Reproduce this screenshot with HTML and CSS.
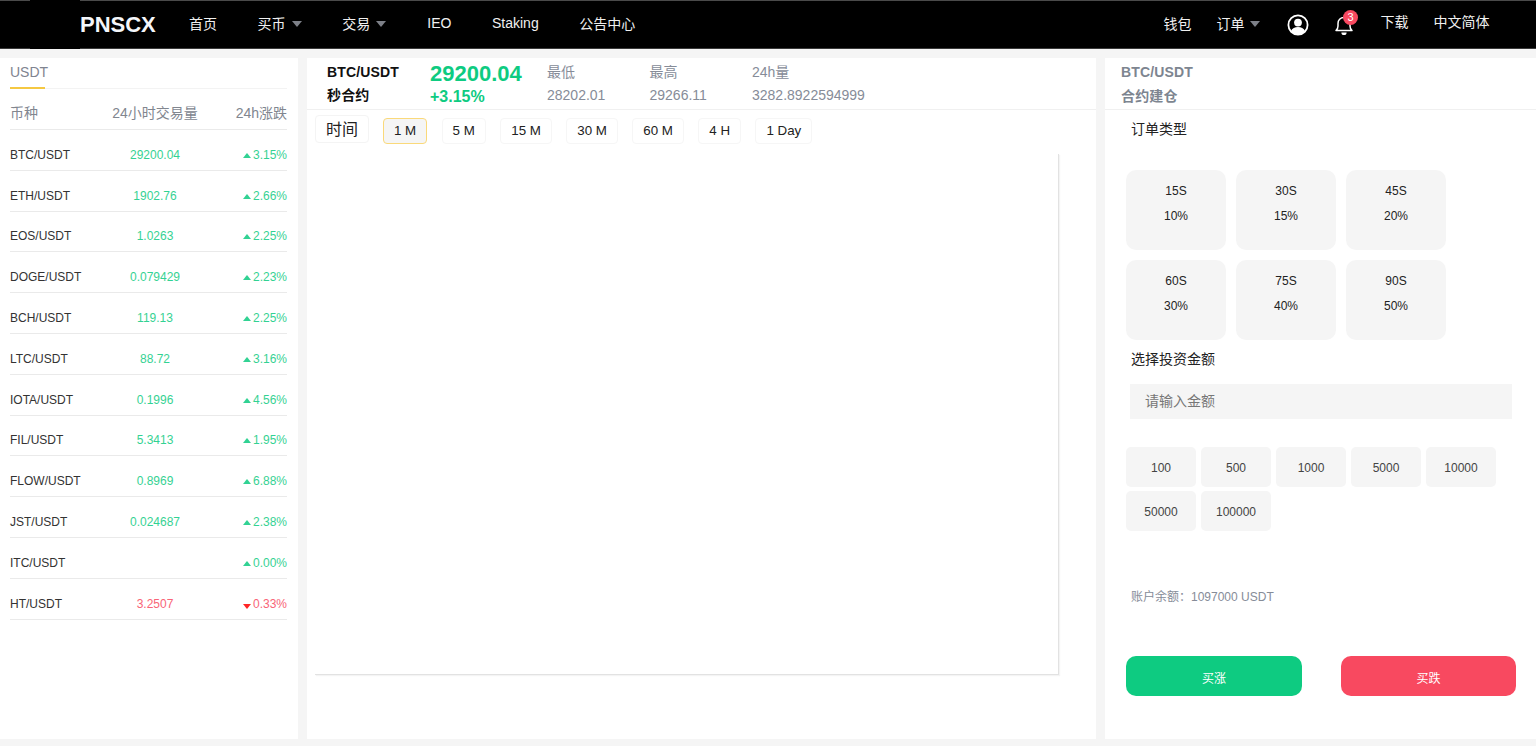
FILE: index.html
```html
<!DOCTYPE html>
<html lang="zh-CN">
<head>
<meta charset="utf-8">
<title>PNSCX</title>
<link rel="stylesheet" href="styles.css">
</head>
<body>
<header class="topbar">
  <div class="brand">PNSCX</div>
  <nav class="nav">
    <a>首页</a>
    <a>买币<i class="caret"></i></a>
    <a>交易<i class="caret"></i></a>
    <a>IEO</a>
    <a>Staking</a>
    <a>公告中心</a>
  </nav>
  <div class="tools">
    <a class="t-wallet">钱包</a>
    <a class="t-order">订单<i class="caret"></i></a>
    <svg class="t-user" width="22" height="22" viewBox="0 0 22 22"><circle cx="11" cy="11" r="9.6" fill="#000" stroke="#fff" stroke-width="1.8"/><circle cx="11" cy="8.6" r="3.9" fill="#fff"/><path d="M3.8 17.2c1.4-3 4-4.3 7.2-4.3s5.8 1.3 7.2 4.3A9.6 9.6 0 0 1 11 20.6a9.6 9.6 0 0 1-7.2-3.4z" fill="#fff"/></svg>
    <span class="t-bell">
      <svg width="20" height="22" viewBox="0 0 20 22"><path d="M2 16.6c1.4-1.3 2-2.6 2-4.6V9.4C4 6 6.3 3.6 10 3.6S16 6 16 9.4V12c0 2 .6 3.3 2 4.6z" fill="none" stroke="#fff" stroke-width="1.5" stroke-linejoin="round"/><path d="M7.4 18.4h5.2a2.6 2.6 0 0 1-5.2 0z" fill="#fff"/></svg>
      <b class="badge">3</b>
    </span>
    <a class="t-dl">下载</a>
    <a class="t-lang">中文简体</a>
  </div>
</header>

<main class="layout">
  <aside class="market">
    <div class="tab"><span>USDT</span></div>
    <div class="m-head"><span class="c1">币种</span><span class="c2">24小时交易量</span><span class="c3">24h涨跌</span></div>
    <div class="m-row"><span class="c1">BTC/USDT</span><span class="c2 up">29200.04</span><span class="c3 up"><i class="tri-up"></i>3.15%</span></div>
    <div class="m-row"><span class="c1">ETH/USDT</span><span class="c2 up">1902.76</span><span class="c3 up"><i class="tri-up"></i>2.66%</span></div>
    <div class="m-row"><span class="c1">EOS/USDT</span><span class="c2 up">1.0263</span><span class="c3 up"><i class="tri-up"></i>2.25%</span></div>
    <div class="m-row"><span class="c1">DOGE/USDT</span><span class="c2 up">0.079429</span><span class="c3 up"><i class="tri-up"></i>2.23%</span></div>
    <div class="m-row"><span class="c1">BCH/USDT</span><span class="c2 up">119.13</span><span class="c3 up"><i class="tri-up"></i>2.25%</span></div>
    <div class="m-row"><span class="c1">LTC/USDT</span><span class="c2 up">88.72</span><span class="c3 up"><i class="tri-up"></i>3.16%</span></div>
    <div class="m-row"><span class="c1">IOTA/USDT</span><span class="c2 up">0.1996</span><span class="c3 up"><i class="tri-up"></i>4.56%</span></div>
    <div class="m-row"><span class="c1">FIL/USDT</span><span class="c2 up">5.3413</span><span class="c3 up"><i class="tri-up"></i>1.95%</span></div>
    <div class="m-row"><span class="c1">FLOW/USDT</span><span class="c2 up">0.8969</span><span class="c3 up"><i class="tri-up"></i>6.88%</span></div>
    <div class="m-row"><span class="c1">JST/USDT</span><span class="c2 up">0.024687</span><span class="c3 up"><i class="tri-up"></i>2.38%</span></div>
    <div class="m-row"><span class="c1">ITC/USDT</span><span class="c2 up"></span><span class="c3 up"><i class="tri-up"></i>0.00%</span></div>
    <div class="m-row"><span class="c1">HT/USDT</span><span class="c2 down">3.2507</span><span class="c3 down"><i class="tri-down"></i>0.33%</span></div>
  </aside>

  <section class="chart-panel">
    <div class="ticker">
      <div class="tk-name"><strong>BTC/USDT</strong><strong>秒合约</strong></div>
      <div class="tk-price"><span class="big">29200.04</span><span class="pct">+3.15%</span></div>
      <div class="tk-stat s1"><span>最低</span><span>28202.01</span></div>
      <div class="tk-stat s2"><span>最高</span><span>29266.11</span></div>
      <div class="tk-stat"><span>24h量</span><span>3282.8922594999</span></div>
    </div>
    <div class="periods">
      <span class="p-label">时间</span>
      <span class="p-btn active">1 M</span>
      <span class="p-btn">5 M</span>
      <span class="p-btn">15 M</span>
      <span class="p-btn">30 M</span>
      <span class="p-btn">60 M</span>
      <span class="p-btn">4 H</span>
      <span class="p-btn">1 Day</span>
    </div>
    <div class="chart"></div>
  </section>

  <aside class="order">
    <div class="o-head"><strong>BTC/USDT</strong><strong>合约建仓</strong></div>
    <div class="o-title first">订单类型</div>
    <div class="cards">
      <div class="card"><span>15S</span><span>10%</span></div>
      <div class="card"><span>30S</span><span>15%</span></div>
      <div class="card"><span>45S</span><span>20%</span></div>
      <div class="card"><span>60S</span><span>30%</span></div>
      <div class="card"><span>75S</span><span>40%</span></div>
      <div class="card"><span>90S</span><span>50%</span></div>
    </div>
    <div class="o-title second">选择投资金额</div>
    <input class="amount" type="text" placeholder="请输入金额">
    <div class="chips">
      <span class="chip">100</span>
      <span class="chip">500</span>
      <span class="chip">1000</span>
      <span class="chip">5000</span>
      <span class="chip">10000</span>
      <span class="chip">50000</span>
      <span class="chip">100000</span>
    </div>
    <div class="balance">账户余额：1097000 USDT</div>
    <div class="actions">
      <button class="btn buy" type="button">买涨</button>
      <button class="btn sell" type="button">买跌</button>
    </div>
  </aside>
</main>
</body>
</html>
```

FILE: styles.css
```css
* { box-sizing: border-box; }
html, body { margin: 0; height: 100%; }
body {
  background: #f5f5f5;
  font-family: "Liberation Sans", "Noto Sans CJK SC", sans-serif;
  color: #222;
  overflow: hidden;
  height: 746px;
}
.topbar {
  position: relative;
  height: 49px;
  background: #000;
  border-top: 1px solid #4a4a4a;
  border-bottom: 1px solid #3a3a3a;
  display: flex;
  align-items: center;
  padding-left: 80px;
  color: #f0f0f0;
  font-size: 14px;
}
.topbar::before {
  content: "";
  position: absolute;
  left: 30px;
  top: -1px;
  width: 50px;
  height: 49px;
  background: #000;
}
.brand { font-size: 22px; font-weight: 700; color: #f4f6fa; width: 109px; }
.nav { display: flex; gap: 40.6px; align-items: center; padding-bottom: 4px; }
.nav a, .tools a { display: flex; align-items: center; white-space: nowrap; }
.caret {
  display: inline-block;
  margin-left: 6px;
  margin-top: 2px;
  border-left: 5px solid transparent;
  border-right: 5px solid transparent;
  border-top: 6px solid #7d8088;
}
.nav a:nth-child(3) { margin-right: .5px; }
.tools { margin-left: auto; display: flex; align-items: center; padding-right: 46.5px; }
.tools a { margin-bottom: 4px; }
.t-order { margin-left: 25px; }
.t-order .caret { margin-left: 5px; }
.t-user { margin-left: 27px; }
.t-bell { position: relative; margin-left: 25px; width: 20px; height: 22px; }
.badge {
  position: absolute;
  left: 9.5px;
  top: -4px;
  width: 15px;
  height: 15px;
  border-radius: 50%;
  background: #f84960;
  color: #fff;
  font-size: 11px;
  font-weight: 400;
  line-height: 15px;
  text-align: center;
}
.t-dl { margin-left: 27px; margin-top: -4px; }
.t-lang { margin-left: 25px; margin-top: -4px; }

.layout {
  display: flex;
  gap: 9px;
  padding-top: 9px;
  height: 690px;
}
.market { width: 298px; height: 681px; background: #fff; padding: 0 11px 0 10px; }
.chart-panel { width: 789px; height: 681px; background: #fff; }
.order { flex: 1; height: 681px; background: #fff; }

.tab { height: 31px; border-bottom: 1px solid #f3f3f3; }
.tab span {
  display: inline-block;
  width: 35px;
  height: 31px;
  padding-top: 6px;
  font-size: 14px;
  line-height: 16px;
  color: #7f8490;
  border-bottom: 2px solid #f5c842;
}
.m-head, .m-row {
  display: grid;
  grid-template-columns: 80px 130px 1fr;
  align-items: center;
  border-bottom: 1px solid #eaeaea;
}
.m-head { height: 41px; font-size: 14px; color: #81868f; padding-top: 5px; }
.m-row { height: 40.8px; font-size: 12px; padding-top: 10px; color: #333; }
.c2 { text-align: center; }
.c3 { text-align: right; }
.up { color: #0ecb81; opacity: .85; }
.down { color: #f84960; opacity: .85; }
.m-row .c3 { white-space: nowrap; }
.tri-up, .tri-down {
  display: inline-block;
  width: 0; height: 0;
  margin-right: 2px;
  vertical-align: 1px;
  border-left: 4px solid transparent;
  border-right: 4px solid transparent;
}
.tri-up { border-bottom: 5px solid #0ecb81; }
.tri-down { border-top: 5px solid #f00; vertical-align: -1px; }

.ticker {
  height: 52px;
  display: flex;
  border-bottom: 1px solid #f0f0f0;
  padding-left: 20px;
}
.tk-name { width: 103px; display: flex; flex-direction: column; font-size: 14px; color: #111; padding-top: 5px; letter-spacing: .15px; }
.tk-name strong { height: 24px; line-height: 19px; }
.tk-price { width: 117px; display: flex; flex-direction: column; padding-top: 3px; }
.big { font-size: 22px; font-weight: 700; color: #0ecb81; line-height: 26px; }
.pct { font-size: 16px; color: #0ecb81; line-height: 24px; margin-top: -2px; font-weight: 600; }
.tk-stat { display: flex; flex-direction: column; font-size: 14px; color: #868c98; padding-top: 5px; }
.tk-stat span { height: 24px; line-height: 19px; }
.s1, .s2 { width: 102.5px; }

.periods { display: flex; align-items: flex-start; padding: 5px 0 0 8px; height: 44px; }
.p-label {
  width: 54px; height: 28px;
  border: 1px solid #f4f4f4;
  border-radius: 4px;
  font-size: 16px;
  line-height: 27px;
  text-align: center;
  margin-right: 14px;
  color: #222;
}
.p-btn {
  height: 26px;
  margin-top: 3px;
  margin-right: 14.4px;
  padding: 0 10px;
  border: 1px solid #f6f6f6;
  border-radius: 4px;
  font-size: 13.33px;
  line-height: 24px;
  color: #222;
  white-space: nowrap;
}
.p-btn.active { background: #f5f5f5; border-color: #fad97a; }
.chart {
  width: 744px;
  height: 521px;
  margin-left: 8px;
  border-right: 1px solid #e2e2e2;
  border-bottom: 1px solid #e2e2e2;
  box-shadow: 1px 1px 1px #f4f4f4;
}

.o-head { height: 52px; border-bottom: 1px solid #f0f0f0; padding: 5px 0 0 16px; display: flex; flex-direction: column; font-size: 14px; color: #7d8590; letter-spacing: .15px; }
.o-head strong { height: 24px; line-height: 19px; }
.o-head strong + strong { padding-top: 1px; }
.o-title { font-size: 14px; color: #222; line-height: 20px; padding-left: 26px; }
.o-title.first { margin-top: 9px; }
.o-title.second { margin-top: 9px; }
.cards { display: grid; grid-template-columns: repeat(3, 100px); gap: 10px; margin: 31px 0 0 21px; }
.card {
  height: 80px;
  background: #f5f5f5;
  border-radius: 10px;
  display: flex;
  flex-direction: column;
  align-items: center;
  font-size: 12px;
  color: #222;
  padding-top: 14px;
}
.card span { height: 25px; line-height: 15px; }
.amount {
  display: block;
  width: 382px;
  height: 35px;
  margin: 15px 0 0 25px;
  background: #f5f5f5;
  border: 0;
  padding: 0 15px 2px;
  font: 14px "Liberation Sans", "Noto Sans CJK SC", sans-serif;
  outline: 0;
}
.amount::placeholder { color: #777; opacity: 1; }
.chips { display: grid; grid-template-columns: repeat(5, 70px); gap: 4px 5px; margin: 28px 0 0 21px; }
.chip {
  height: 40px;
  background: #f5f5f5;
  border-radius: 5px;
  font-size: 12px;
  color: #444;
  line-height: 42px;
  text-align: center;
}
.balance { font-size: 12px; color: #868c98; margin: 59px 0 0 26px; line-height: 15px; }
.actions { display: flex; justify-content: space-between; margin: 51px 20px 0 21px; }
.btn {
  width: 176px;
  height: 40px;
  border: 0;
  border-radius: 10px;
  color: #fff;
  font: 12px "Liberation Sans", "Noto Sans CJK SC", sans-serif;
  padding-top: 4px;
}
.sell { width: 175px; background: #f84960; }
.buy { background: #0ecb81; }
```
